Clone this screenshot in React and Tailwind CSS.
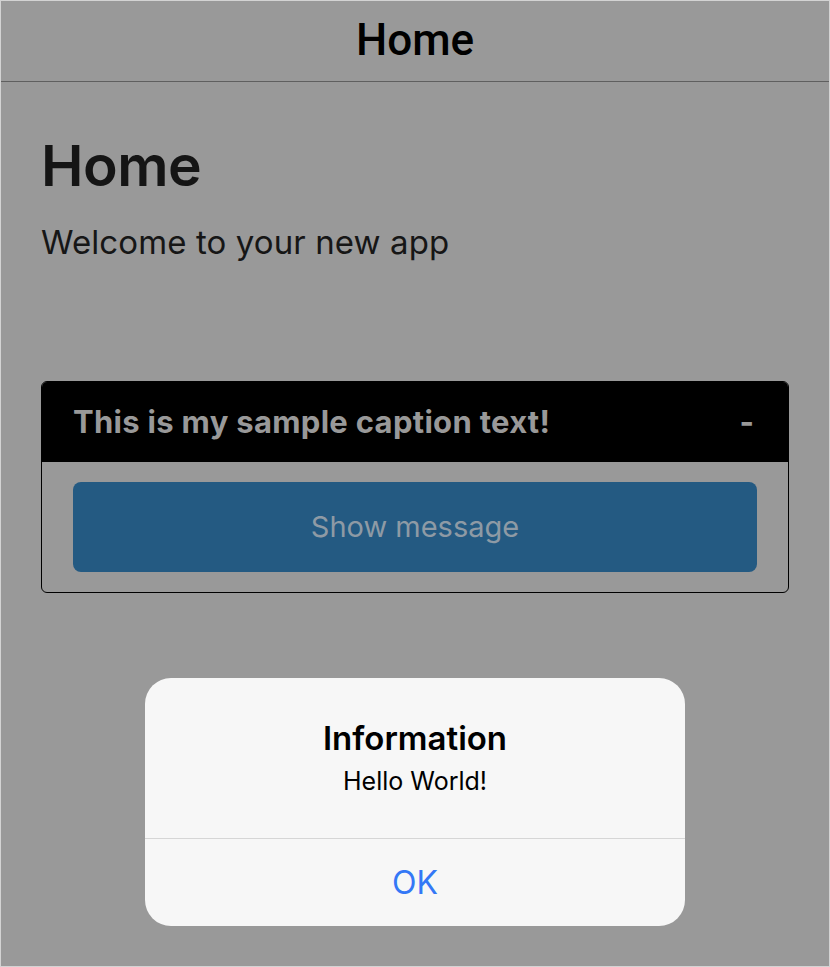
import React from "react";

// iOS-style screen, dimmed behind an alert dialog
const SF = { fontFamily: "Inter, 'Noto Sans', sans-serif" };

export default function App() {
  return (
    <div className="relative w-[830px] h-[967px] overflow-hidden border border-[#d3d3d3] bg-[#999999]">
      {/* nav bar */}
      <div className="h-[81px] border-b border-[#5f5f5f] flex items-center justify-center">
        <span className="text-[44px] leading-none text-black font-medium font-['Roboto',Arial,sans-serif] pb-[2px]">
          Home
        </span>
      </div>

      {/* page content */}
      <div className="px-[40px] pt-[52px]" style={SF}>
        <h1 className="text-[57px] leading-[64px] font-semibold text-[#151515] tracking-[-0.5px]">Home</h1>
        <p className="mt-[24px] text-[33px] leading-[40px] text-[#161616] tracking-[0.1px]">Welcome to your new app</p>

        <div className="mt-[119px] border border-black rounded-[6px] overflow-hidden">
          <div className="h-[80px] bg-black flex items-center justify-between pl-[31px] pr-[34px]">
            <span className="text-[31px] font-bold text-[#999999] tracking-[0.3px]">This is my sample caption text!</span>
            <span className="text-[31px] font-bold text-[#999999]">-</span>
          </div>
          <div className="px-[31px] pt-[20px] pb-[20px]">
            <button className="w-full h-[90px] rounded-[8px] bg-[#245a82] text-[29px] text-[#8e9aa5] flex items-center justify-center">
              Show message
            </button>
          </div>
        </div>
      </div>

      {/* alert */}
      <div className="absolute inset-0 flex justify-center pt-[677px]" style={SF}>
        <div className="w-[540px] h-[248px] rounded-[26px] bg-[#f7f7f7] flex flex-col">
          <div className="h-[160px] flex flex-col items-center pt-[38px]">
            <span className="text-[33px] leading-[44px] font-semibold text-black">Information</span>
            <span className="mt-[5px] text-[25px] leading-[32px] text-black">Hello World!</span>
          </div>
          <div className="flex-1 border-t border-[#d6d6d6] flex items-center justify-center">
            <span className="text-[32px] text-[#3478f6]">OK</span>
          </div>
        </div>
      </div>
    </div>
  );
}
